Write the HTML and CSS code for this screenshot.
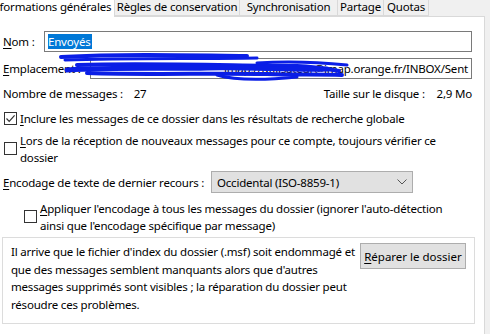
FILE: index.html
```html
<!DOCTYPE html>
<html lang="fr">
<head>
  <meta charset="UTF-8" />
  <title>Propriétés du dossier</title>
  <link rel="stylesheet" href="styles.css">
</head>
<body>

<div class="tabs">
  <div class="tab active">Informations générales</div>
  <div class="tab tab-rules">Règles de conservation</div>
  <div class="tab tab-sync">Synchronisation</div>
  <div class="tab tab-share">Partage</div>
  <div class="tab tab-quota">Quotas</div>
</div>

<div class="panel">
  <div class="row">
    <label class="lbl lbl-name"><u>N</u>om :</label>
    <div class="field name-field"><span class="sel">Envoyés</span></div>
  </div>

  <div class="row row-loc">
    <label class="lbl lbl-loc"><u>E</u>mplacement :</label>
    <div class="field loc-field"><span class="loc-text">imap://utilisateur@imap.orange.fr/INBOX/Sent</span></div>
  </div>

  <div class="info">
    <div>Nombre de messages : <span class="num">27</span></div>
    <div>Taille sur le disque : <span class="size">2,9 Mo</span></div>
  </div>

  <div class="check">
    <span class="box">
      <svg width="11" height="11" viewBox="0 0 11 11"><path d="M1.5 5.5 L4.2 8.3 L9.6 2.4" fill="none" stroke="#333" stroke-width="1.2"/></svg>
    </span>
    <span><u>I</u>nclure les messages de ce dossier dans les résultats de recherche globale</span>
  </div>

  <div class="check check-2">
    <span class="box"></span>
    <span><u>L</u>ors de la réception de nouveaux messages pour ce compte, toujours vérifier ce dossier</span>
  </div>

  <div class="row row-enc">
    <label class="lbl lbl-enc"><u>E</u>ncodage de texte de dernier recours :</label>
    <div class="select">
      <span>Occidental (ISO-8859-1)</span>
      <svg width="10" height="6" viewBox="0 0 10 6"><path d="M0.5 0.5 L5 5 L9.5 0.5" fill="none" stroke="#555" stroke-width="1"/></svg>
    </div>
  </div>

  <div class="check check-3">
    <span class="box"></span>
    <span><u>A</u>ppliquer l'encodage à tous les messages du dossier (ignorer l'auto-détection ainsi que l'encodage spécifique par message)</span>
  </div>

  <div class="group">
    <p>Il arrive que le fichier d'index du dossier (.msf) soit endommagé et que des messages semblent manquants alors que d'autres messages supprimés sont visibles ; la réparation du dossier peut résoudre ces problèmes.</p>
    <button class="btn"><u>R</u>éparer le dossier</button>
  </div>

  <!-- gribouillage bleu qui masque l'adresse -->
  <svg class="scribble" width="300" height="32" viewBox="0 0 300 32">
    <g fill="none" stroke="#0a1ee6" stroke-linecap="round" stroke-linejoin="round">
      <path d="M4 4 C60 1 120 2 190 3" stroke-width="4"/>
      <path d="M8 7 C70 5 140 6 200 5" stroke-width="3"/>
      <path d="M20 12 C80 10 150 12 240 13 C260 14 270 16 282 18" stroke-width="4"/>
      <path d="M10 17 C60 14 110 16 150 15 C190 14 230 17 270 16" stroke-width="5"/>
      <path d="M30 20 C90 22 150 20 210 21 C240 22 260 21 285 22" stroke-width="4"/>
      <path d="M160 22 C180 28 210 27 240 24" stroke-width="3"/>
      <path d="M200 10 C230 8 260 9 290 12" stroke-width="3"/>
    </g>
  </svg>
</div>

</body>
</html>
```

FILE: styles.css
```css
body {
  margin: 0;
  background: #f0f0f0;
  font-family: "Noto Sans", "Open Sans", sans-serif;
  font-size: 11.5px;
  letter-spacing: -0.2px;
  color: #000;
  overflow: hidden;
  width: 490px;
  height: 334px;
}

.tabs {
  display: flex;
  height: 17px;
  margin-left: -12px;
}

.tab {
  flex: none;
  height: 16px;
  line-height: 14px;
  border: 1px solid #d9d9d9;
  border-top: none;
  border-left: none;
  background: #f0f0f0;
  white-space: nowrap;
  text-align: center;
  box-sizing: border-box;
}

.tab.active {
  width: 127px;
  text-align: left;
  background: #fff;
  height: 17px;
  border-bottom: none;
  padding-left: 1px;
  position: relative;
  z-index: 1;
}

.tab-rules { width: 125px; }
.tab-sync { width: 98px; }
.tab-share { width: 46px; }
.tab-quota { width: 45px; }

.panel {
  position: relative;
  width: 485px;
  height: 318px;
  margin-top: -1px;
  background: #fff;
  border-top: 1px solid #d9d9d9;
  border-right: 1px solid #d9d9d9;
  padding: 14px 0 0 3px;
  box-sizing: border-box;
  overflow: hidden;
}

.row {
  display: flex;
  align-items: center;
  height: 21px;
}

.row-loc {
  margin-top: 6px;
}

.lbl {
  flex: none;
}

.lbl-name { width: 41px; }
.lbl-loc { width: 87px; }
.lbl-enc { width: 208px; }

.lbl u,
.check u,
.btn u {
  text-decoration-thickness: 1px;
  text-underline-offset: 2px;
}

.field {
  height: 21px;
  border: 1px solid #7a7a7a;
  box-sizing: border-box;
  background: #fff;
  display: flex;
  align-items: center;
  overflow: hidden;
  white-space: nowrap;
}

.name-field {
  width: 428px;
  padding-left: 3px;
}

.sel {
  background: #0078d7;
  color: #fff;
  line-height: 15px;
  padding-right: 1px;
}

.loc-field {
  width: 382px;
  justify-content: flex-end;
  padding-right: 3px;
}

.info {
  display: flex;
  justify-content: space-between;
  width: 469px;
  margin-top: 6px;
  height: 17px;
  line-height: 17px;
}

.num {
  margin-left: 8px;
}

.size {
  margin-left: 9px;
}

.check {
  display: flex;
  align-items: flex-start;
  gap: 3px;
  margin-top: 8px;
  line-height: 17px;
  width: 440px;
}

.box {
  flex: none;
  width: 13px;
  height: 13px;
  border: 1px solid #333;
  box-sizing: border-box;
  margin-top: 2px;
  margin-left: 1px;
  display: flex;
  align-items: center;
  justify-content: center;
  background: #fff;
}

.check-2 {
  margin-top: 5px;
  width: 448px;
}

.check-2 .box,
.check-3 .box {
  margin-top: 10px;
}

.row-enc {
  margin-top: 5px;
  height: 22px;
}

.select {
  width: 202px;
  height: 22px;
  box-sizing: border-box;
  border: 1px solid #adadad;
  background: #e1e1e1;
  display: flex;
  align-items: center;
  justify-content: space-between;
  padding: 0 5px 0 5px;
}

.check-3 {
  margin-top: 7px;
  margin-left: 20px;
  width: 430px;
}

.group {
  display: flex;
  justify-content: space-between;
  align-items: flex-start;
  width: 473px;
  margin-top: 3px;
  margin-left: -1px;
  border: 1px solid #dcdcdc;
  box-sizing: border-box;
  padding: 5px 8px 10px 8px;
}

.group p {
  margin: 0;
  width: 345px;
  line-height: 17.5px;
}

.btn {
  font: inherit;
  color: #000;
  width: 106px;
  height: 26px;
  border: 1px solid #adadad;
  background: #e1e1e1;
  padding: 0;
}

.scribble {
  position: absolute;
  left: 57px;
  top: 36px;
}
```
